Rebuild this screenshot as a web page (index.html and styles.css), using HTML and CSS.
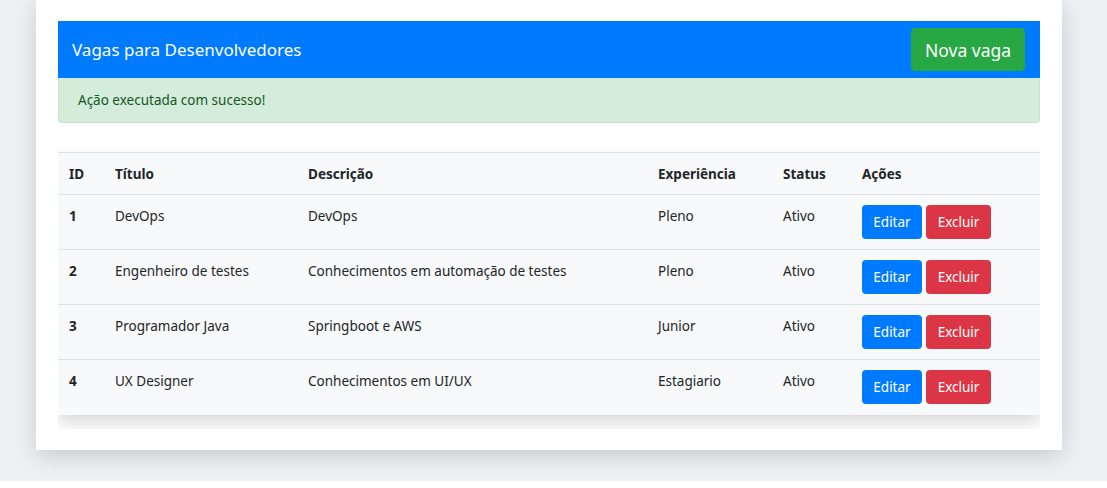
FILE: index.html
```html
<!DOCTYPE html>
<html lang="pt-BR">
<head>
<meta charset="utf-8">
<title>Vagas para Desenvolvedores</title>
<link rel="stylesheet" href="styles.css">
</head>
<body>
<div class="page">
  <main class="card">
    <header class="panel-head">
      <h1 class="panel-title">Vagas para Desenvolvedores</h1>
      <button class="btn btn-green btn-lg">Nova vaga</button>
    </header>
    <div class="alert">Ação executada com sucesso!</div>
    <div class="table-wrap">
      <table class="jobs">
        <colgroup>
          <col class="c-id"><col class="c-title"><col class="c-desc"><col class="c-exp"><col class="c-status"><col class="c-act">
        </colgroup>
        <thead>
          <tr><th>ID</th><th>Título</th><th>Descrição</th><th>Experiência</th><th>Status</th><th>Ações</th></tr>
        </thead>
        <tbody>
          <tr><td class="id">1</td><td>DevOps</td><td>DevOps</td><td>Pleno</td><td>Ativo</td><td><div class="actions"><button class="btn btn-blue">Editar</button><button class="btn btn-red">Excluir</button></div></td></tr>
          <tr><td class="id">2</td><td>Engenheiro de testes</td><td>Conhecimentos em automação de testes</td><td>Pleno</td><td>Ativo</td><td><div class="actions"><button class="btn btn-blue">Editar</button><button class="btn btn-red">Excluir</button></div></td></tr>
          <tr><td class="id">3</td><td>Programador Java</td><td>Springboot e AWS</td><td>Junior</td><td>Ativo</td><td><div class="actions"><button class="btn btn-blue">Editar</button><button class="btn btn-red">Excluir</button></div></td></tr>
          <tr><td class="id">4</td><td>UX Designer</td><td>Conhecimentos em UI/UX</td><td>Estagiario</td><td>Ativo</td><td><div class="actions"><button class="btn btn-blue">Editar</button><button class="btn btn-red">Excluir</button></div></td></tr>
        </tbody>
      </table>
    </div>
  </main>
</div>
<div class="footer-strip"></div>
</body>
</html>
```

FILE: styles.css
```css
* { box-sizing: border-box; }
html, body { margin: 0; padding: 0; }
body {
  background: #ffffff;
  font-family: "Noto Sans", "Open Sans", sans-serif;
  font-size: 13.5px;
  color: #212529;
}
.page {
  background: #eff0f4;
  height: 481px;
  padding: 0 45px 0 36px;
  overflow: hidden;
}
.card {
  background: #ffffff;
  width: 1026px;
  height: 450px;
  padding: 21px 22px 0 22px;
  box-shadow: 0 6px 22px rgba(0, 0, 0, 0.16);
}
.panel-head {
  background: #007bff;
  height: 57px;
  display: flex;
  align-items: center;
  justify-content: space-between;
  padding: 0 15px 0 14px;
}
.panel-title {
  margin: 0;
  font-size: 17px;
  font-weight: 400;
  color: #ffffff;
}
.btn {
  font-family: inherit;
  border: 0;
  border-radius: 4px;
  color: #ffffff;
  cursor: pointer;
}
.btn-lg {
  width: 114px;
  height: 43px;
  font-size: 17.5px;
  padding: 0;
}
.btn-green { background: #28a745; }
.btn-blue { background: #007bff; width: 60px; }
.btn-red { background: #dc3545; width: 65px; }
.alert {
  background: #d4edda;
  border: 1px solid #c3e6cb;
  border-top: 0;
  border-radius: 0 0 4px 4px;
  color: #155724;
  height: 45px;
  padding: 0 19px;
  display: flex;
  align-items: center;
}
.table-wrap {
  margin-top: 15px;
  padding: 14px 0;
  overflow: hidden;
}
.jobs {
  width: 982px;
  table-layout: fixed;
  border-collapse: collapse;
  background: #f8f9fa;
  box-shadow: 0 8px 16px rgba(0, 0, 0, 0.15);
}
.c-id { width: 46px; }
.c-title { width: 193px; }
.c-desc { width: 350px; }
.c-exp { width: 125px; }
.c-status { width: 79px; }
.c-act { width: 189px; }
.jobs th, .jobs td {
  text-align: left;
  vertical-align: top;
  padding: 11px 11px 8px 11px;
  line-height: 21px;
  border-top: 1px solid #dee2e6;
}
.jobs th { font-weight: 700; height: 42px; }
.jobs td.id { font-weight: 700; }
.jobs tbody td { height: 55px; }
.actions { display: flex; gap: 4px; margin-top: -1px; }
.actions .btn {
  height: 34px;
  font-size: 13.5px;
  padding: 0;
}
.footer-strip {
  height: 7px;
  margin-left: 4px;
  background: #ffffff;
}
```
